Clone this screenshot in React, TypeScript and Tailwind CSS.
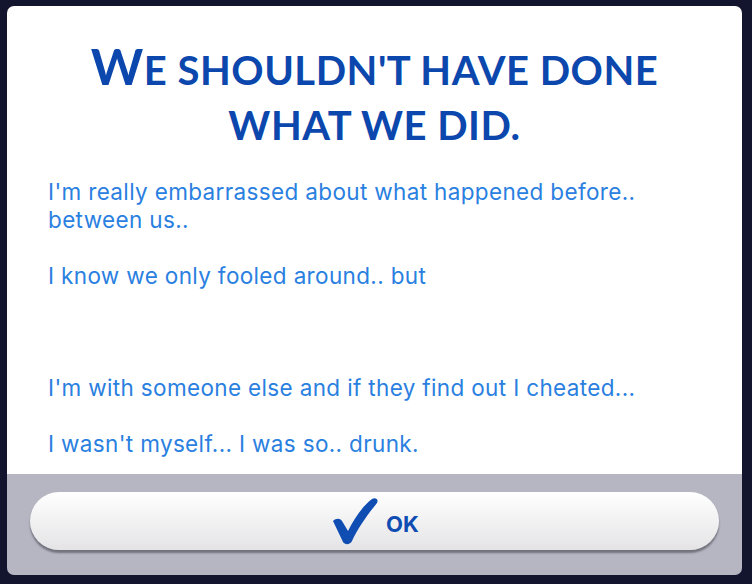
import React from "react";

const lines = [
  "I'm really embarrassed about what happened before..",
  "between us..",
  "",
  "I know we only fooled around.. but",
  "",
  "",
  "",
  "I'm with someone else and if they find out I cheated...",
  "",
  "I wasn't myself... I was so.. drunk.",
];

function CheckMark() {
  return (
    <svg width="50" height="48" viewBox="0 0 50 48" className="shrink-0">
      <path
        d="M3 24 C6 21 10 21 12 24 L18 34 C25 20 33 9 42 2 C45 0 49 2 47 6 C38 17 28 31 22 44 C20 48 15 48 13 45 Z"
        fill="#0f4db3"
      />
    </svg>
  );
}

export default function App() {
  return (
    <div
      className="w-[752px] h-[584px] bg-[#13152f] pt-[6px] pl-[7px] pr-[10px] pb-[9px]"
      style={{ fontFamily: "Inter, sans-serif" }}
    >
      <div className="flex flex-col h-full rounded-[7px] overflow-hidden">
        <div className="flex-1 bg-white px-[41px] pt-[33px]">
          <h1
            className="text-center text-[#0b47ad] font-bold tracking-[0.5px]"
            style={{ fontFamily: "Lato, sans-serif" }}
          >
            <div className="h-[59px] text-[40px] leading-[55px]">
              <span className="text-[50px]">W</span>E SHOULDN'T HAVE DONE
            </div>
            <div className="h-[55px] text-[40px] leading-[55px]">WHAT WE DID.</div>
          </h1>
          <div className="mt-[25px] text-[22.5px] leading-[28px] tracking-[0.35px] text-[#2a80e0]">
            {lines.map((l, i) => (
              <p key={i} className="h-[28px]">
                {l}
              </p>
            ))}
          </div>
        </div>
        <div className="h-[101px] bg-[#b5b6c2] px-[23px] pt-[18px]">
          <button className="w-full h-[58px] rounded-full bg-gradient-to-b from-white to-[#e4e4e6] shadow-[0_3px_2px_rgba(60,60,70,0.55)] flex items-center justify-center gap-[6px]">
            <CheckMark />
            <span className="text-[22px] font-bold text-[#0f4db3] mt-[6px]">OK</span>
          </button>
        </div>
      </div>
    </div>
  );
}
